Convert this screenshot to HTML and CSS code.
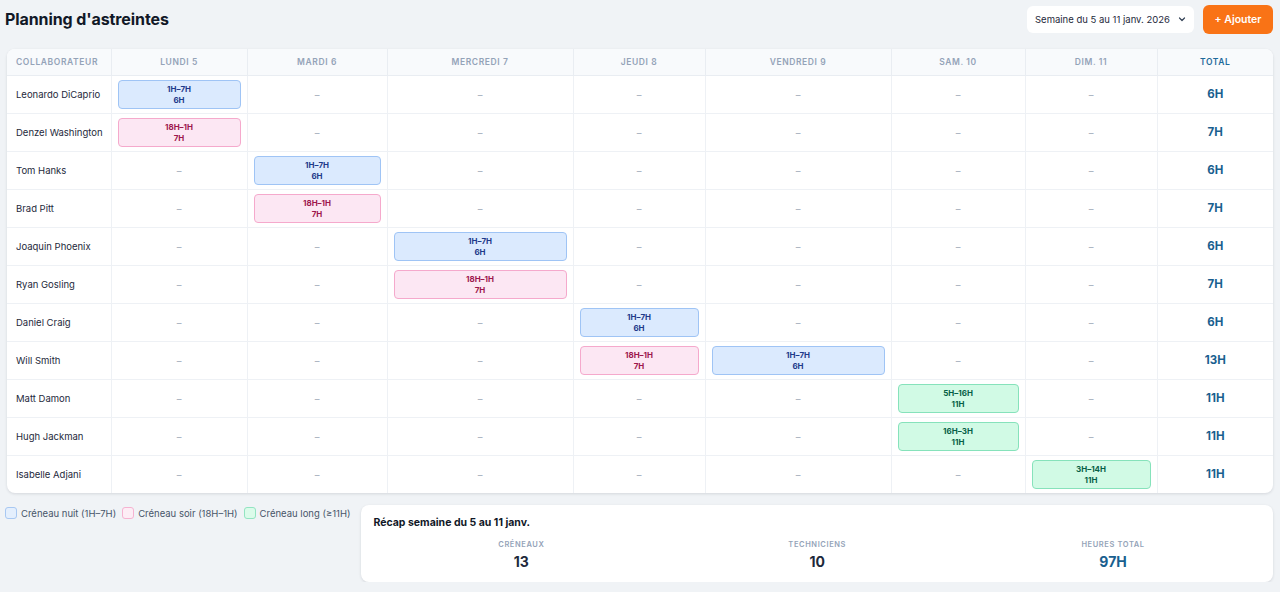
FILE: index.html
```html
<!DOCTYPE html>
<html lang="fr">
<head>
    <meta charset="UTF-8">
    <meta name="viewport" content="width=device-width, initial-scale=1.0">
    <title>Planning d'astreintes</title>
    <link rel="stylesheet" href="styles.css">
</head>
<body>
    <header class="topbar">
        <h1>Planning d'astreintes</h1>
        <div class="actions">
            <div class="week-select">
                <span>Semaine du 5 au 11 janv. 2026</span>
                <svg width="8" height="8" viewBox="0 0 8 8"><path d="M1.5 3l2.5 2.5L6.5 3" fill="none" stroke="#334155" stroke-width="1.2" stroke-linecap="round" stroke-linejoin="round"/></svg>
            </div>
            <button class="add-btn">+ Ajouter</button>
        </div>
    </header>

    <div class="card planning">
        <table>
            <colgroup>
                <col style="width:104px"><col style="width:136px"><col style="width:140px"><col style="width:186px"><col style="width:132px"><col style="width:186px"><col style="width:134px"><col style="width:132px"><col>
            </colgroup>
            <thead>
                <tr>
                    <th class="name-col">Collaborateur</th>
                    <th>Lundi 5</th>
                    <th>Mardi 6</th>
                    <th>Mercredi 7</th>
                    <th>Jeudi 8</th>
                    <th>Vendredi 9</th>
                    <th>Sam. 10</th>
                    <th>Dim. 11</th>
                    <th class="total-col">Total</th>
                </tr>
            </thead>
            <tbody id="rows"></tbody>
        </table>
    </div>

    <div class="bottom">
        <div class="legend">
            <span class="legend-item"><i class="swatch night"></i>Créneau nuit (1H–7H)</span>
            <span class="legend-item"><i class="swatch evening"></i>Créneau soir (18H–1H)</span>
            <span class="legend-item"><i class="swatch long"></i>Créneau long (≥11H)</span>
        </div>
        <div class="card recap">
            <h3>Récap semaine du 5 au 11 janv.</h3>
            <div class="stats">
                <div class="stat"><span class="label">Créneaux</span><span class="value">13</span></div>
                <div class="stat"><span class="label">Techniciens</span><span class="value">10</span></div>
                <div class="stat"><span class="label">Heures total</span><span class="value blue">97H</span></div>
            </div>
        </div>
    </div>

    <script>
        // day index -> [range, hours, type]
        var planning = [
            ["Leonardo DiCaprio", { 0: ["1H–7H", "6H", "night"] }],
            ["Denzel Washington", { 0: ["18H–1H", "7H", "evening"] }],
            ["Tom Hanks", { 1: ["1H–7H", "6H", "night"] }],
            ["Brad Pitt", { 1: ["18H–1H", "7H", "evening"] }],
            ["Joaquin Phoenix", { 2: ["1H–7H", "6H", "night"] }],
            ["Ryan Gosling", { 2: ["18H–1H", "7H", "evening"] }],
            ["Daniel Craig", { 3: ["1H–7H", "6H", "night"] }],
            ["Will Smith", { 3: ["18H–1H", "7H", "evening"], 4: ["1H–7H", "6H", "night"] }],
            ["Matt Damon", { 5: ["5H–16H", "11H", "long"] }],
            ["Hugh Jackman", { 5: ["16H–3H", "11H", "long"] }],
            ["Isabelle Adjani", { 6: ["3H–14H", "11H", "long"] }]
        ];

        var tbody = document.getElementById("rows");
        planning.forEach(function (row) {
            var html = '<td class="name-col">' + row[0] + '</td>';
            var total = 0;
            for (var d = 0; d < 7; d++) {
                var slot = row[1][d];
                if (slot) {
                    total += parseInt(slot[1], 10);
                    html += '<td><div class="slot ' + slot[2] + '">' + slot[0] + '<br>' + slot[1] + '</div></td>';
                } else {
                    html += '<td class="empty">–</td>';
                }
            }
            html += '<td class="total-col">' + total + 'H</td>';
            var tr = document.createElement("tr");
            tr.innerHTML = html;
            tbody.appendChild(tr);
        });
    </script>
</body>
</html>
```

FILE: styles.css
```css
* {
    box-sizing: border-box;
}
body {
    margin: 0;
    padding: 4px 7px 0 7px;
    font-family: Inter, "Noto Sans", sans-serif;
    background-color: #f0f3f6;
    color: #1e293b;
}
.topbar {
    display: flex;
    justify-content: space-between;
    align-items: center;
    height: 30px;
    margin-bottom: 15px;
}
h1 {
    margin: 0 0 0 -2px;
    font-size: 16px;
    font-weight: 700;
    color: #111827;
    letter-spacing: -0.1px;
}
.actions {
    display: flex;
    align-items: center;
    gap: 9px;
}
.week-select {
    display: flex;
    align-items: center;
    justify-content: space-between;
    width: 167px;
    height: 27px;
    padding: 0 8px;
    background-color: #fff;
    border-radius: 6px;
    font-size: 9.5px;
    color: #1e293b;
}
.add-btn {
    height: 29px;
    width: 70px;
    border: none;
    border-radius: 6px;
    background-color: #f97316;
    color: #fff;
    font-family: inherit;
    font-size: 10.5px;
    font-weight: 600;
}
.card {
    background-color: #fff;
    border-radius: 8px;
    box-shadow: 0 1px 3px rgba(15, 23, 42, 0.12);
}
.planning {
    overflow: hidden;
}
table {
    width: 100%;
    border-collapse: collapse;
    table-layout: fixed;
}
th {
    height: 26px;
    background-color: #f8fafc;
    font-size: 8.5px;
    font-weight: 600;
    letter-spacing: 0.6px;
    text-transform: uppercase;
    color: #94a3b8;
    text-align: center;
    border-bottom: 1px solid #e9edf2;
    border-left: 1px solid #e9edf2;
}
th:first-child, td:first-child {
    border-left: none;
}
td {
    height: 38px;
    padding: 0 6px;
    text-align: center;
    border-top: 1px solid #eef1f5;
    border-left: 1px solid #eef1f5;
    font-size: 9.5px;
}
tbody tr:first-child td {
    border-top: none;
}
.name-col {
    text-align: left;
    padding-left: 9px;
    color: #1e293b;
}
th.name-col {
    color: #94a3b8;
}
.empty {
    color: #a0aab8;
}
th.total-col {
    color: #1d6a9b;
}
td.total-col {
    font-size: 11.5px;
    font-weight: 700;
    color: #1a5f8f;
}
.slot {
    height: 29px;
    padding-top: 3px;
    border-radius: 4px;
    border: 1px solid;
    font-size: 8px;
    font-weight: 700;
    line-height: 11.5px;
}
.night {
    background-color: #dbeafe;
    border-color: #9fc4f5;
    color: #1e3a8a;
}
.evening {
    background-color: #fce7f3;
    border-color: #f5a9cc;
    color: #9d174d;
}
.long {
    background-color: #d1fae5;
    border-color: #86e2bb;
    color: #065f46;
}
.bottom {
    display: flex;
    gap: 11px;
    margin-top: 12px;
}
.legend {
    display: flex;
    gap: 6px;
    height: 16px;
    align-items: center;
    margin-left: -2px;
}
.legend-item {
    display: flex;
    align-items: center;
    gap: 4px;
    font-size: 9.5px;
    color: #475569;
}
.swatch {
    display: inline-block;
    width: 12px;
    height: 12px;
    border-radius: 3px;
    border: 1px solid;
}
.swatch.night {
    background-color: #e4effd;
    border-color: #a8c8f2;
}
.swatch.evening {
    background-color: #fdedf5;
    border-color: #f5b3d1;
}
.swatch.long {
    background-color: #dbfbea;
    border-color: #93e4c2;
}
.recap {
    flex: 1;
    height: 77px;
    padding: 11px 12px;
}
.recap h3 {
    margin: 0 0 11px 0;
    font-size: 10.5px;
    font-weight: 700;
    color: #111827;
}
.stats {
    display: grid;
    grid-template-columns: 1fr 1fr 1fr;
}
.stat {
    display: flex;
    flex-direction: column;
    align-items: center;
    gap: 4px;
}
.label {
    font-size: 7.5px;
    font-weight: 600;
    letter-spacing: 0.6px;
    text-transform: uppercase;
    color: #94a3b8;
}
.value {
    font-size: 14px;
    font-weight: 700;
    color: #1e293b;
}
.value.blue {
    color: #1a5f8f;
}
```
